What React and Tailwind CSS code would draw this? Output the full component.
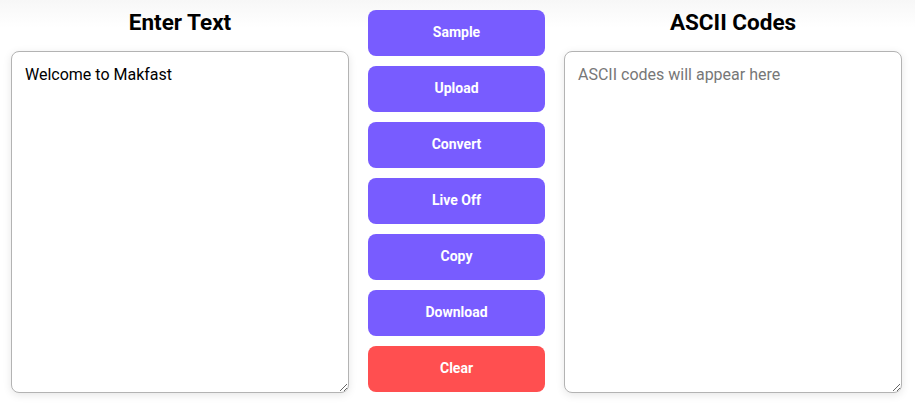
export default function App() {
  const buttons = ["Sample", "Upload", "Convert", "Live Off", "Copy", "Download"];

  return (
    <div
      className="min-h-[405px] bg-[linear-gradient(#f7f7f7,#ffffff_28px)] pl-[11px] pr-[13px] pt-[10px] flex gap-[19px]"
      style={{ fontFamily: "Roboto, 'Liberation Sans', sans-serif" }}
    >
      {/* Input column */}
      <div className="w-[338px] flex flex-col">
        <h2 className="text-[22.5px] font-bold text-black text-center leading-[24px]">
          Enter Text
        </h2>
        <textarea
          defaultValue="Welcome to Makfast"
          className="mt-[17px] h-[342px] w-full rounded-lg border border-[#b3b3b3] bg-white px-[13px] pt-[11px] pb-[13px] text-[16px] text-black shadow-[0_2px_8px_rgba(0,0,0,0.1)] outline-none"
        />
      </div>

      {/* Buttons */}
      <div className="w-[177px] flex flex-col gap-[10px]">
        {buttons.map((label) => (
          <button
            key={label}
            className="h-[46px] rounded-lg bg-[#785cff] pb-[2px] text-[14px] font-bold text-white"
          >
            {label}
          </button>
        ))}
        <button className="h-[46px] rounded-lg bg-[#ff4f50] pb-[2px] text-[14px] font-bold text-white">
          Clear
        </button>
      </div>

      {/* Output column */}
      <div className="w-[338px] flex flex-col">
        <h2 className="text-[22.5px] font-bold text-black text-center leading-[24px]">
          ASCII Codes
        </h2>
        <textarea
          placeholder="ASCII codes will appear here"
          readOnly
          className="mt-[17px] h-[342px] w-full rounded-lg border border-[#b3b3b3] bg-white px-[13px] pt-[11px] pb-[13px] text-[16px] text-black placeholder:text-[#777] shadow-[0_2px_8px_rgba(0,0,0,0.1)] outline-none"
        />
      </div>
    </div>
  );
}
